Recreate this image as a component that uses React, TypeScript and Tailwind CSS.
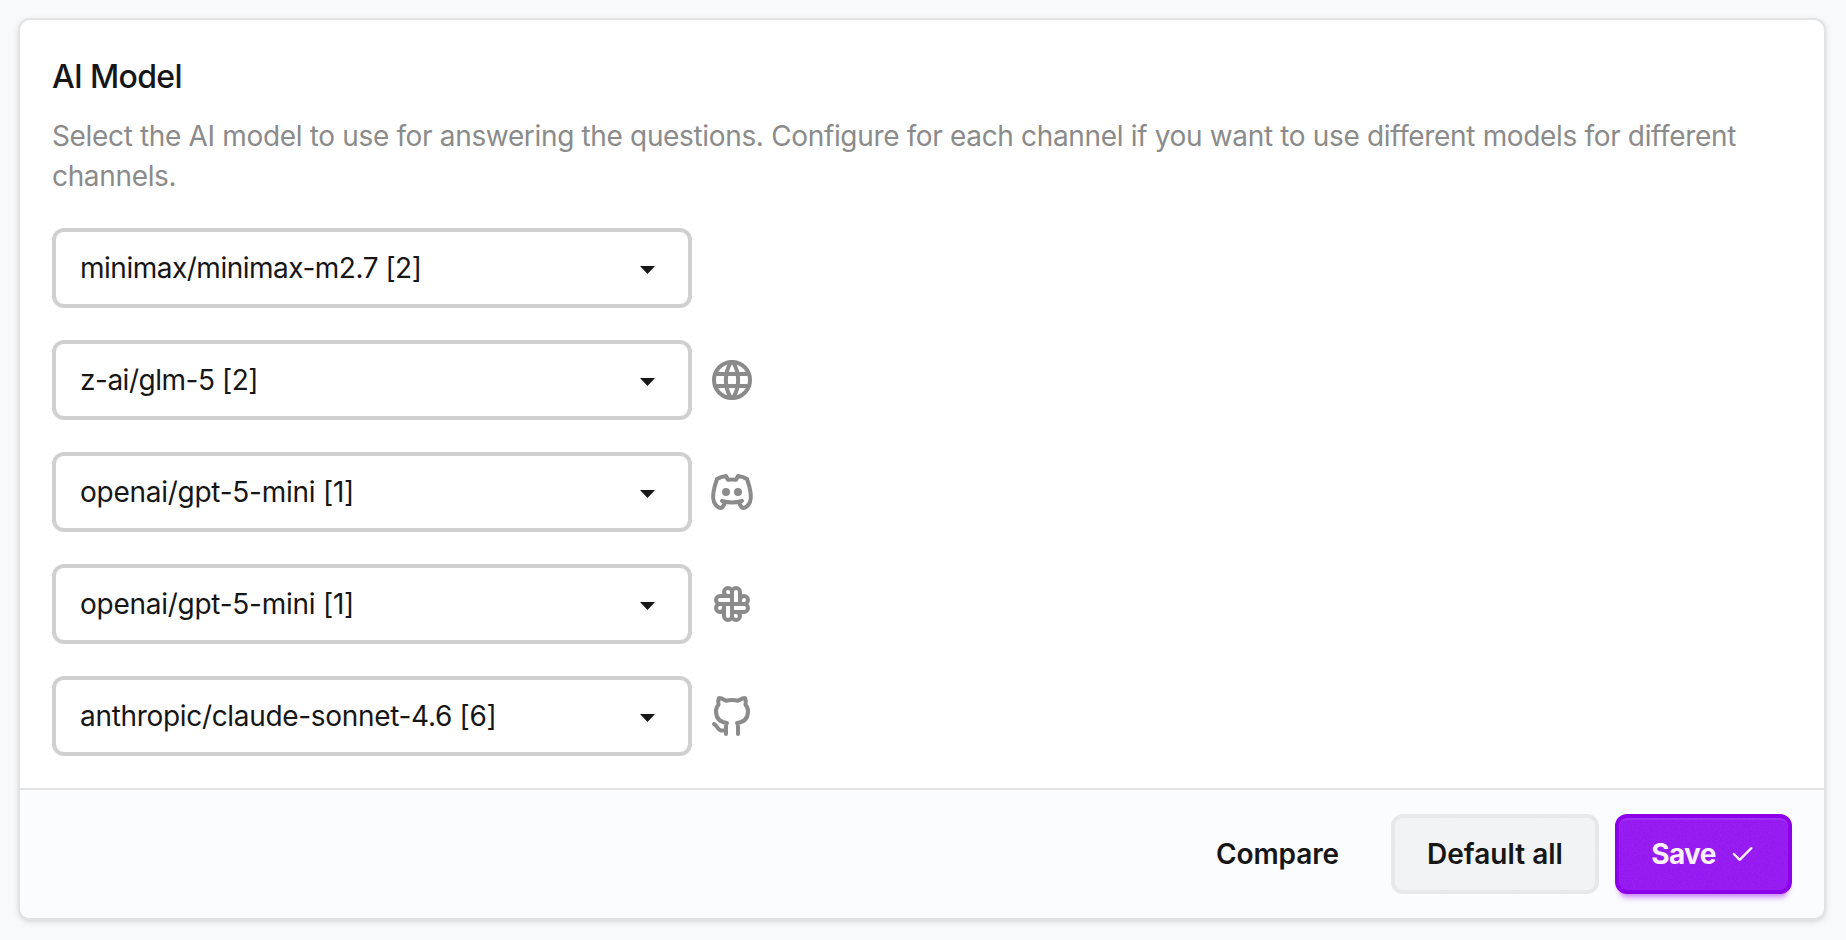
import React from "react"
import clsx from "clsx"
import {
  TbBrandDiscord,
  TbBrandGithub,
  TbBrandSlack,
  TbCheck,
  TbWorld,
} from "react-icons/tb"

type ModelSelectProps = {
  value: string
  tracking: string
  icon?: React.ReactNode
}

const models: ModelSelectProps[] = [
  { value: "minimax/minimax-m2.7 [2]", tracking: "tracking-[-0.49px]" },
  {
    value: "z-ai/glm-5 [2]",
    tracking: "tracking-[-0.48px]",
    icon: <TbWorld size={48} />,
  },
  {
    value: "openai/gpt-5-mini [1]",
    tracking: "tracking-[-0.26px]",
    icon: <TbBrandDiscord size={48} />,
  },
  {
    value: "openai/gpt-5-mini [1]",
    tracking: "tracking-[-0.26px]",
    icon: <TbBrandSlack size={48} />,
  },
  {
    value: "anthropic/claude-sonnet-4.6 [6]",
    tracking: "tracking-[-0.32px]",
    icon: <TbBrandGithub size={48} />,
  },
]

function ModelSelect({ value, tracking, icon }: ModelSelectProps) {
  return (
    <div className="flex items-center gap-4 text-[#8b8b8b]">
      <button className="flex h-20 w-[640px] items-center justify-between rounded-xl border-4 border-[#d0d0d0] bg-white pl-6 pr-8 text-[28px] text-[#161616]">
        <span className={clsx(tracking)}>{value}</span>
        <svg width="16" height="8" viewBox="0 0 16 8" fill="currentColor" className="mt-1">
          <path d="M0 0h15L7.5 8z" />
        </svg>
      </button>
      {icon}
    </div>
  )
}

// fine grain laid over the filled buttons
function Noise({ id, className }: { id: string; className: string }) {
  return (
    <svg className={clsx("absolute inset-0 h-full w-full rounded-lg", className)}>
      <filter id={id} x="0" y="0" width="100%" height="100%">
        <feTurbulence type="fractalNoise" baseFrequency="0.67" numOctaves="4" />
        <feColorMatrix values="0 0 0 0 1  0 0 0 0 1  0 0 0 0 1  0 0 0 1 0" />
      </filter>
      <rect width="100%" height="100%" filter={`url(#${id})`} />
    </svg>
  )
}

function App() {
  return (
    <div className="min-h-screen bg-[#f8f9fb] p-[18px] pr-5 font-['Inter',sans-serif] antialiased">
      <div className="flex h-[902px] flex-col rounded-xl border-2 border-[#e3e3e3] bg-white shadow-[0_2px_6px_rgba(0,0,0,0.1),0_2px_4px_-2px_rgba(0,0,0,0.1)]">
        <div className="flex-1 px-8 pt-[33px]">
          <h2 className="text-[32px] font-medium leading-[48px] tracking-[-0.66px] text-[#161616]">
            AI Model
          </h2>
          <p className="mt-[15px] text-[28px] leading-10 tracking-[-0.34px] text-[#8b8b8b]">
            Select the AI model to use for answering the questions. Configure for each channel if
            you want to use different models for different <br />
            channels.
          </p>
          <div className="mt-8 flex flex-col gap-8">
            {models.map((model, index) => (
              <ModelSelect key={index} {...model} />
            ))}
          </div>
        </div>
        <div className="flex h-[130px] items-center justify-end gap-4 rounded-b-[10px] border-t-2 border-[#e3e3e3] bg-[#fbfcfe] px-8 text-[28px] font-semibold text-[#161616]">
          <button className="h-20 px-9 tracking-[-0.1px]">Compare</button>
          <button className="relative h-20 w-[208px] rounded-xl border-4 border-[#e7e8ea] bg-[#f1f2f3]">
            <Noise id="noise-default" className="opacity-15" />
            <span className="relative">Default all</span>
          </button>
          <button className="relative flex h-20 w-[177px] items-center justify-center gap-3 rounded-xl border-4 border-[#8c00ea] bg-[#9212f0] text-[#f9f0ff] shadow-[inset_0_2px_0_rgba(255,255,255,0.1),0_6px_4px_-4px_rgba(152,16,250,0.3),0_8px_6px_-4px_rgba(152,16,250,0.3)]">
            <Noise id="noise-save" className="opacity-8" />
            <span className="relative font-bold tracking-[-0.6px]">Save</span>
            <TbCheck size={28} strokeWidth={2} className="relative" />
          </button>
        </div>
      </div>
    </div>
  )
}

export default App
